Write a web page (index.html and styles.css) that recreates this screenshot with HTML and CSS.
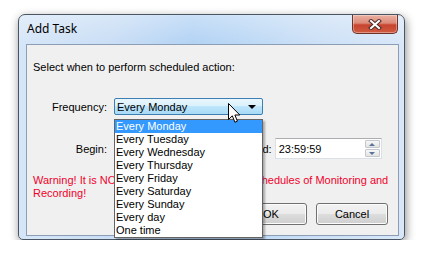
FILE: index.html
```html
<!DOCTYPE html>
<html lang="en">
<head>
  <meta charset="UTF-8" />
  <title>Add Task</title>
  <link rel="stylesheet" href="styles.css">
</head>
<body>

<div class="window">
  <div class="titlebar">
    <span class="title">Add Task</span>
    <span class="close">
      <svg width="14" height="11" viewBox="0 0 14 11">
        <path d="M3 2 L11 9 M11 2 L3 9" stroke="#4b2a28" stroke-width="4" stroke-linecap="square" />
        <path d="M3 2 L11 9 M11 2 L3 9" stroke="#ffffff" stroke-width="2" stroke-linecap="square" />
      </svg>
    </span>
  </div>

  <div class="client">
    <p class="intro">Select when to perform scheduled action:</p>

    <div class="row freq-row">
      <label class="label">Frequency:</label>
      <div class="combo-wrap">
        <div class="combo">
          <span>Every Monday</span>
          <span class="arrow"></span>
        </div>
        <ul class="dropdown">
          <li class="selected">Every Monday</li>
          <li>Every Tuesday</li>
          <li>Every Wednesday</li>
          <li>Every Thursday</li>
          <li>Every Friday</li>
          <li>Every Saturday</li>
          <li>Every Sunday</li>
          <li>Every day</li>
          <li>One time</li>
        </ul>
        <svg class="cursor" width="13" height="21" viewBox="0 0 13 21">
          <path d="M0.5 0.5 L0.5 16.5 L4.3 12.8 L6.9 19.2 L9.4 18.2 L6.9 12 L11.8 12 Z" fill="#ffffff" stroke="#000000" stroke-width="1" stroke-linejoin="miter" />
        </svg>
      </div>
    </div>

    <div class="row begin-row">
      <label class="label">Begin:</label>
      <div class="field date-field">9/13/2010</div>
      <label class="end-label">End:</label>
      <div class="field time-field">
        <span>23:59:59</span>
        <span class="spin">
          <span class="spin-btn up"></span>
          <span class="spin-btn down"></span>
        </span>
      </div>
    </div>

    <p class="warning">Warning! It is NOT recommended to overlap schedules of Monitoring and Recording!</p>

    <div class="buttons">
      <button type="button">OK</button>
      <button type="button">Cancel</button>
    </div>
  </div>
</div>

</body>
</html>
```

FILE: styles.css
```css
* {
  box-sizing: border-box;
}
body {
  margin: 0;
  background: #ffffff;
  font-family: 'Liberation Sans', Arial, sans-serif;
  font-size: 11px;
  color: #000;
}

/* window frame */
.window {
  margin: 14px 0 0 18px;
  width: 387px;
  height: 226px;
  border: 1px solid #4a5563;
  border-radius: 7px 7px 5px 5px;
  padding: 0 5px 3px 7px;
  display: flex;
  flex-direction: column;
  background:
    linear-gradient(to bottom, rgba(255,255,255,0.3), rgba(255,255,255,0) 30px),
    linear-gradient(to right, #d6e6f8 0%, #c8ddf5 25%, #b2d2f4 45%, #b8d6f5 55%, #cadff6 75%, #d8e7f8 100%);
  box-shadow: 0 0 1px 0 rgba(255,255,255,0.9) inset, 1px 3px 10px rgba(0,0,0,0.45);
}
.titlebar {
  height: 29px;
  display: flex;
  justify-content: space-between;
  align-items: flex-start;
}
.title {
  font-family: 'Noto Sans', 'Open Sans', sans-serif;
  font-size: 12px;
  line-height: 16px;
  padding: 6px 0 0 1px;
  color: #000;
}
.close {
  width: 46px;
  height: 19px;
  margin-right: 1px;
  border: 1px solid #6f3229;
  border-top: none;
  border-radius: 0 0 5px 5px;
  background: linear-gradient(to bottom, #eab0a2 0%, #dc8b79 45%, #c7432f 55%, #d05c40 100%);
  box-shadow: inset 0 0 0 1px rgba(255,255,255,0.35);
  display: flex;
  align-items: center;
  justify-content: center;
}

/* dialog body */
.client {
  flex: 1;
  border: 1px solid #8c9eb5;
  background: #f0f0f0;
  padding: 0 10px 0 6px;
}
.intro {
  margin: 16px 0 0;
  line-height: 13px;
}
.row {
  display: flex;
  align-items: center;
}
.label {
  width: 74px;
  text-align: right;
  margin-right: 7px;
}
.freq-row {
  margin-top: 24px;
}
.combo-wrap {
  position: relative;
}
.combo {
  width: 149px;
  height: 17px;
  border: 1px solid #3c7fb1;
  border-radius: 2px;
  background: linear-gradient(to bottom, #eaf6fd 0%, #d9f0fc 50%, #bee6fd 50%, #a7d9f5 100%);
  display: flex;
  align-items: center;
  justify-content: space-between;
  padding: 0 6px 0 2px;
}
.arrow {
  width: 0;
  height: 0;
  border-left: 4px solid transparent;
  border-right: 4px solid transparent;
  border-top: 4px solid #000;
}
.dropdown {
  position: absolute;
  top: 21px;
  left: 0;
  width: 149px;
  margin: 0;
  padding: 0;
  list-style: none;
  background: #ffffff;
  border: 1px solid #646464;
  box-shadow: 2px 2px 2px rgba(0,0,0,0.3);
  z-index: 2;
}
.dropdown li {
  height: 13px;
  line-height: 13px;
  padding-left: 1px;
}
.dropdown li.selected {
  background: #3399ff;
  color: #ffffff;
}
.cursor {
  position: absolute;
  left: 114px;
  top: 5px;
  z-index: 3;
}
.begin-row {
  margin-top: 23px;
}
.field {
  height: 21px;
  background: #ffffff;
  border: 1px solid #dbdfe6;
  border-top-color: #abadb3;
  display: flex;
  align-items: center;
  padding-left: 3px;
}
.date-field {
  width: 120px;
}
.end-label {
  margin: 0 3px 0 15px;
}
.time-field {
  width: 107px;
  justify-content: space-between;
  padding-right: 1px;
}
.spin {
  display: flex;
  flex-direction: column;
  gap: 1px;
}
.spin-btn {
  width: 15px;
  height: 8px;
  border: 1px solid #c4c8ce;
  border-radius: 1px;
  background: linear-gradient(to bottom, #f7f7f7, #e3e3e3);
  display: flex;
  align-items: center;
  justify-content: center;
}
.spin-btn::after {
  content: "";
  border-left: 3px solid transparent;
  border-right: 3px solid transparent;
}
.spin-btn.up::after {
  border-bottom: 3px solid #58739a;
}
.spin-btn.down::after {
  border-top: 3px solid #58739a;
}
.warning {
  margin: 15px 0 0;
  line-height: 13px;
  color: #f0002c;
  width: 360px;
}
.buttons {
  display: flex;
  justify-content: flex-end;
  gap: 9px;
  margin-top: 3px;
}
button {
  width: 72px;
  height: 22px;
  border: 1px solid #707070;
  border-radius: 3px;
  background: linear-gradient(to bottom, #f2f2f2 0%, #ebebeb 50%, #dddddd 50%, #cfcfcf 100%);
  box-shadow: inset 0 0 0 1px #fcfcfc;
  font-family: 'Liberation Sans', Arial, sans-serif;
  font-size: 11px;
  padding: 0;
  color: #000;
}
```
